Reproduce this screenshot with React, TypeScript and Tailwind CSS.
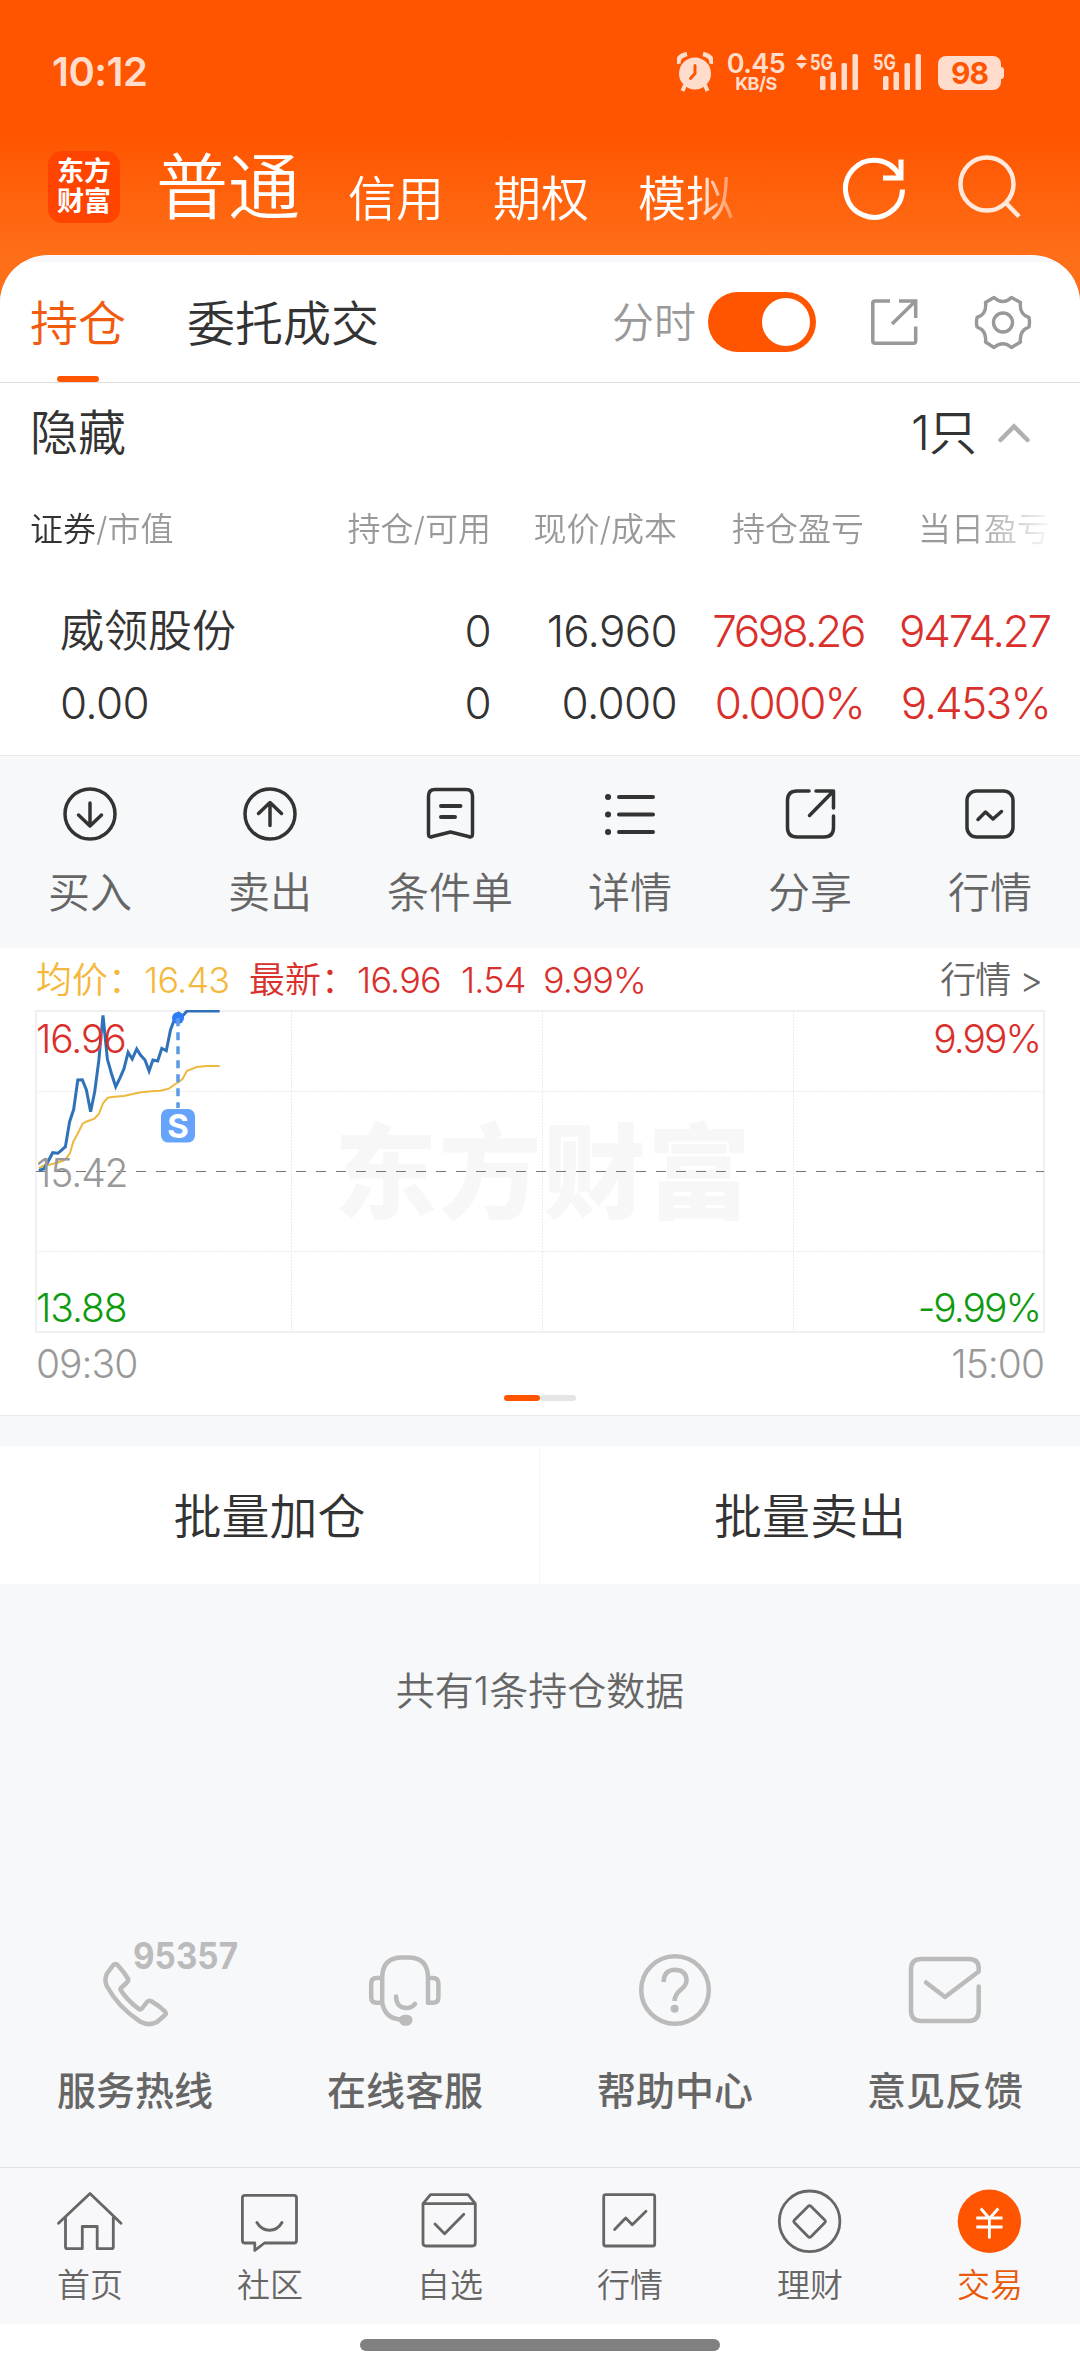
import type { ReactNode } from "react";
import clsx from "clsx";

const accounts = ["信用", "期权", "模拟"];

const actions: { label: string; icon: ReactNode }[] = [
  {
    label: "买入",
    icon: (
      <>
        <circle cx="30" cy="30" r="25" />
        <path d="M30 19V41.5M18.5 31L30 42L41.5 31" />
      </>
    ),
  },
  {
    label: "卖出",
    icon: (
      <>
        <circle cx="30" cy="30" r="25" />
        <path d="M30 41.5V19M18.5 29.5L30 18.5L41.5 29.5" />
      </>
    ),
  },
  {
    label: "条件单",
    icon: (
      <>
        <path d="M8.5 12Q8.5 5.5 15 5.5H46Q52.5 5.5 52.5 12V50Q52.5 54 48.5 52.5L30.5 48L12.5 52.5Q8.5 54 8.5 50Z" />
        <path strokeWidth="4" d="M21 22H40.500M21 33H35" />
      </>
    ),
  },
  {
    label: "详情",
    icon: (
      <>
        <path strokeWidth="4" d="M19 13H53M19 30.5H53M19 48H53" />
        <path strokeWidth="6" d="M8 13H8.1M8 30.5H8.1M8 48H8.1" />
      </>
    ),
  },
  {
    label: "分享",
    icon: <path d="M29 7H17Q7.5 7 7.5 16.5V43.5Q7.5 53 17 53H44Q53.5 53 53.5 43.5V32M36 7H53.5V24M29.500 31.500L53 7.5" />,
  },
  {
    label: "行情",
    icon: (
      <>
        <rect x="7" y="7" width="46" height="46" rx="9.5" />
        <path d="M18 35.5L25.5 28L33 35L41.5 27.5" />
      </>
    ),
  },
];

const services: { label: string; icon: ReactNode }[] = [
  {
    label: "服务热线",
    icon: (
      <>
        <path d="M113 35.5Q115.4 32.5 118 35.5Q124 42 127.8 48.5Q129 50.5 127 52.5L121 58Q120 59 121 60.5Q127 70 138.5 78.8Q140.5 80 142 78.5L147 72Q148.8 70 151 71Q159 75.5 165 81.5Q166.5 83.5 165 85L157 92Q149 96.5 140 91.5Q118 77 106.8 56Q104 49.5 107 43.5Z" />
        <text
          x="133"
          y="39"
          fontSize="37"
          fontWeight="700"
          textLength="105"
          lengthAdjust="spacingAndGlyphs"
          className="fill-[#bbb] stroke-none"
        >
          95357
        </text>
      </>
    ),
  },
  {
    label: "在线客服",
    icon: (
      <>
        <path d="M112.2 73V48Q112.2 27.5 132 27.5H138.5Q158 27.5 158 48V72.7H163Q168.4 72.7 168.4 67.5V53.5Q168.4 48 163 48H158M112.2 48H106.5Q101.2 48 101.2 53.5V67.5Q101.2 72.7 106.5 72.7H112.2Q115 89 131 89.5" />
        <path d="M126 66.5Q126.5 78 136.5 78Q141.5 78 145 74" />
        <rect x="129" y="84.7" width="13.5" height="11" rx="5.5" className="fill-[#bbb] stroke-none" />
      </>
    ),
  },
  {
    label: "帮助中心",
    icon: (
      <>
        <circle cx="135" cy="60" r="33.8" />
        <path strokeLinecap="butt" d="M123.7 52Q123.7 39.8 135.5 39.8Q146.5 40.5 146.5 50.5Q146.5 55 140.5 60Q134.6 65 134.6 71" />
        <circle cx="134.6" cy="78.7" r="4" className="fill-[#bbb] stroke-none" />
      </>
    ),
  },
  {
    label: "意见反馈",
    icon: <path d="M168.7 56.5V80.5Q168.7 91 158.5 91H111.5Q101 91 101 80.5V39.5Q101 29 111.5 29H158.5Q168.7 29 168.7 38V41.5L135 67L116 52.5" />,
  },
];

const tabs: { label: string; active?: boolean; icon: ReactNode }[] = [
  {
    label: "首页",
    icon: <path d="M4.5 38.3L36 8.5L67 38.3M11.5 33V62Q11.5 63.7 13.2 63.7H28.3V41.5H43.2V63.7H57.6Q59.3 63.7 59.3 62V33" />,
  },
  {
    label: "社区",
    icon: (
      <>
        <path d="M11 10.3H60Q62.5 10.3 62.5 12.8V55.5Q62.5 58 60 58H30.5L20.8 65.5V58H11Q8.4 58 8.4 55.5V12.8Q8.4 10.3 11 10.3Z" />
        <path strokeWidth="3" d="M22.9 37.5Q27.5 45.2 35.6 45.2Q43.5 45.2 48 37.5" />
      </>
    ),
  },
  {
    label: "自选",
    icon: <path d="M9 18.7L16.5 9.7H54L61.3 18.7V58Q61.3 61 58.3 61H12Q9 61 9 58ZM9 18.7H61.3M21 39L30.6 48.7L49.8 29.3" />,
  },
  {
    label: "行情",
    icon: (
      <>
        <rect x="9.7" y="9.7" width="51" height="51.3" rx="2" />
        <path d="M20.6 44.5L31.7 33L38.3 39.7L52 26.3" />
      </>
    ),
  },
  {
    label: "理财",
    icon: (
      <>
        <circle cx="35.6" cy="36.3" r="30.3" />
        <path d="M34 21.5Q35.6 19.8 37.2 21.5L50.7 35Q52.3 36.3 50.7 37.7L37.2 51.5Q35.6 53 34 51.5L20.5 37.7Q19 36.3 20.5 35Z" />
      </>
    ),
  },
  {
    label: "交易",
    active: true,
    icon: (
      <>
        <circle cx="35.4" cy="36.3" r="31.7" className="fill-[#ff5500] stroke-none" />
        <path className="stroke-white" strokeLinecap="butt" d="M26.8 23.5L35.4 33.5L44.3 23.5M35.4 33V53.5M22.3 33H48.5M22.3 42H48.5" />
      </>
    ),
  },
];

const pricePoints =
  "38.9,230.7 44,228.7 48.2,221.3 52.7,212.7 57.9,213.3 61.3,210.3 65.4,206.7 69.6,181.7 73.7,169.3 77.8,140 82.3,139.7 86.4,150 90.6,171.7 94.7,151.7 98.8,120.7 103,75.3 107.4,119.3 111.6,134 115.7,146.7 119.8,138.3 124,128.7 128.1,112.3 132.2,119 136.7,109 140.5,115 145,120 149.1,131 152.9,120 157.7,121 161.8,108.3 166.3,110.7 170.5,90 174.2,80 178.7,73.3 182.5,76 187,71 219.7,71";

const averagePoints =
  "38.9,228.3 43,225.7 48.2,225 56.8,222.7 63.7,220.7 67.1,217.3 69.9,213.3 73.3,201.7 77.5,194 82.6,183.7 86.1,181.7 90.2,180.3 94.7,178.3 98.8,174 103,163.3 107.4,158 111.6,157 124,156 132.6,154 141.2,152.3 151.5,151.3 160.1,150.7 168.7,148.7 173.9,145 178.7,142 182.5,139 187,130.7 191.1,129.3 196.3,127 206.6,126 219.7,126";

function Signal({ arrows }: { arrows?: boolean }) {
  return (
    <svg width="64" height="40" viewBox="0 0 64 40" fill="#ffdccb">
      {arrows && <path d="M0 10L5.500 4L11 10ZM0 13H11L5.500 19Z" />}
      <text x="14" y="19.5" fontSize="21.5" fontWeight="700" textLength="23" lengthAdjust="spacingAndGlyphs">
        5G
      </text>
      <rect x="24" y="26" width="5.5" height="14" rx="1.5" />
      <rect x="34.5" y="22" width="5.5" height="18" rx="1.5" />
      <rect x="45.5" y="13" width="5.5" height="27" rx="1.5" />
      <rect x="56.5" y="4" width="5.5" height="36" rx="1.5" />
    </svg>
  );
}

function StatusBar() {
  return (
    <div className="flex h-[144px] items-start pt-[50px] pl-[52px] text-[#ffdccb]">
      <div className="w-[625px] pt-[2px] text-[40px] leading-[40px] font-semibold tracking-[-0.5px]">10:12</div>
      <svg width="36" height="40" viewBox="0 0 36 40" className="mt-[2px]">
        <path d="M1.5 12Q0 4 10 2M34.5 12Q36 4 26 2" stroke="#ffdccb" strokeWidth="4.500" fill="none" />
        <path d="M8 33L5.500 39M28 33L30.500 39" stroke="#ffdccb" strokeWidth="4" />
        <circle cx="18" cy="21.5" r="16" fill="#ffdccb" />
        <path d="M18 13.500V21.500L13.500 26.500" stroke="#ff5500" strokeWidth="3" fill="none" strokeLinecap="round" />
      </svg>
      <div className="ml-[13px] flex w-[60px] flex-col items-center">
        <span className="text-[27px] leading-[27px] font-semibold tracking-[-0.5px]">0.45</span>
        <span className="text-[18px] leading-[14px] font-bold tracking-[-0.5px]">KB/S</span>
      </div>
      <div className="ml-[10px]">
        <Signal arrows />
      </div>
      <div className="-ml-px">
        <Signal />
      </div>
      <div className="mt-[6px] ml-[15px] flex h-[34px] w-[63px] items-center justify-center rounded-[8px] bg-[#ffdccb] text-[30px] leading-none font-bold tracking-[-1px] text-[#ff5500]">
        98
      </div>
      <div className="mt-[17px] h-[12px] w-[3px] rounded-r-[3px] bg-[#ffdccb]" />
    </div>
  );
}

function AccountBar() {
  return (
    <div className="flex h-[111px] items-start pl-[48px] text-white">
      <div className="mt-[7px] flex h-[72px] w-[72px] flex-col items-center justify-center rounded-[14px] bg-[#ff4400] text-[27px] leading-[30px] font-bold">
        <span>东方</span>
        <span>财富</span>
      </div>
      <div className="flex w-[690px] items-start font-[350] [mask-image:linear-gradient(to_right,#000_575px,transparent_630px)]">
        <span className="mt-[7px] ml-[36px] text-[72px] leading-[72px]">普通</span>
        <div className="ml-[48px] flex gap-[49px] pt-[31px] text-[48px] leading-[48px]">
          {accounts.map((name) => (
            <span key={name}>{name}</span>
          ))}
        </div>
      </div>
      <svg width="68" height="72" viewBox="0 0 68 72" className="mt-[8px] ml-[31px]" fill="none" stroke="white" strokeWidth="5">
        <path d="M61.500 37.500A28.500 28.500 0 1 1 58.500 24" />
        <path d="M60 7.500V26H42" />
      </svg>
      <svg width="68" height="72" viewBox="0 0 68 72" className="mt-[4px] ml-[46px]" fill="none" stroke="#ffe8dc" strokeWidth="4.500">
        <circle cx="32" cy="36" r="26.500" />
        <path d="M51 55L64 68.500" />
      </svg>
    </div>
  );
}

function PanelHeader() {
  return (
    <div className="flex h-[121px] items-center border-b border-[#ddd] bg-white pl-[30px] font-[350]">
      <div className="relative flex h-full items-center pt-[3px] text-[48px] text-[#f25a0e]">
        持仓
        <div className="absolute bottom-0 left-[27px] h-[6px] w-[42px] rounded-full bg-[#ff5500]" />
      </div>
      <div className="ml-[61px] w-[425px] pt-[3px] text-[48px] text-[#333]">委托成交</div>
      <div className="pt-[2px] text-[42px] text-[#999]">分时</div>
      <div className="ml-[12px] flex h-[60px] w-[108px] items-center justify-end rounded-full bg-[#ff5500] pr-[6px]">
        <div className="h-[48px] w-[48px] rounded-full bg-white" />
      </div>
      <svg width="60" height="60" viewBox="0 0 60 60" className="ml-[48px]" fill="none" stroke="#999" strokeWidth="3.500">
        <path d="M26 9H11Q8.800 9 8.800 11V49Q8.800 51.200 11 51.200H49.500Q51.700 51.200 51.700 49V34.500M35 9H51.700V26M28 32L51 9.500" />
      </svg>
      <svg width="60" height="60" viewBox="0 0 60 60" className="ml-[49px]" fill="none" stroke="#999" strokeWidth="3.400" strokeLinejoin="round">
        <path d="M21 5.500Q30 13.500 38.500 5.500L47.500 10.500Q46 22.500 56 25.500Q57 30 56 35Q46 38.500 47.500 50L38.500 55.500Q30 48 21 55.500L12.500 50Q14 38.500 4 35Q3 30 4 25.500Q14 22.500 12.500 10.500Z" />
        <circle cx="30" cy="30.500" r="9.500" />
      </svg>
    </div>
  );
}

function Holdings() {
  return (
    <section className="h-[372px] bg-white font-[350] text-[#333]">
      <div className="flex h-[100px] items-center pl-[30px] text-[48px]">
        <span>隐藏</span>
        <span className="ml-auto tracking-[-1px]">1只</span>
        <svg width="36" height="24" viewBox="0 0 36 24" className="mr-[48px] ml-[20px]" fill="none" stroke="#b0b0b0" strokeWidth="4.500" strokeLinecap="round">
          <path d="M4.500 19L18 5.500L31.500 19" />
        </svg>
      </div>
      <div className="mr-[30px] grid h-[92px] grid-cols-[269px_192px_186px_187px_186px] items-center pl-[30px] text-right text-[33px] text-[#999] [mask-image:linear-gradient(to_right,#000_970px,transparent_1055px)]">
        <span className="text-left">
          <span className="text-[#333]">证券</span>/市值
        </span>
        <span>持仓/可用</span>
        <span>现价/成本</span>
        <span>持仓盈亏</span>
        <span>当日盈亏</span>
      </div>
      <div className="mt-[20px] grid grid-cols-[238px_193px_186px_187px_186px] pl-[60px] text-right text-[44px] leading-[72px] tracking-[-0.7px]">
        <span className="text-left tracking-normal">威领股份</span>
        <span>0</span>
        <span>16.960</span>
        <span className="tracking-[-2.4px] text-[#d9302c]">7698.26</span>
        <span className="tracking-[-2.2px] text-[#d9302c]">9474.27</span>
        <span className="text-left">0.00</span>
        <span>0</span>
        <span>0.000</span>
        <span className="tracking-[-1.8px] text-[#d9302c]">0.000%</span>
        <span className="tracking-[-1.7px] text-[#d9302c]">9.453%</span>
      </div>
    </section>
  );
}

function Chart() {
  return (
    <section className="h-[468px] border-b border-[#e9eaee] bg-white font-[350]">
      <div className="flex h-[62px] items-center pt-px pr-[38px] pl-[36px] text-[36px] tracking-[-0.8px] text-[#d9302c]">
        <span className="w-[213px] text-[#f5b83d]">
          <span className="tracking-normal">均价：</span>16.43
        </span>
        <span className="w-[212px]">
          <span className="tracking-normal">最新：</span>16.96
        </span>
        <span className="w-[82px]">1.54</span>
        <span className="tracking-[-1px]">9.99%</span>
        <span className="ml-auto tracking-[-1px] text-[#666]">行情 &gt;</span>
      </div>
      <svg width="1080" height="326" viewBox="0 70 1080 326" fill="none" className="block">
        <text x="334" y="271" fontSize="103" fontWeight="900" letterSpacing="1.5" className="fill-[#f7f7f7]">
          东方财富
        </text>
        <rect x="36" y="71" width="1008" height="321" stroke="#f0f0f0" strokeWidth="2" />
        <path d="M36 151.500H1044M36 311.500H1044M291.500 71V392M542.500 71V392M793.500 71V392" stroke="#ebebeb" strokeDasharray="2 1" />
        <path d="M36 231.500H1044" stroke="#777" strokeDasharray="10 10" />
        <polyline points={averagePoints} stroke="#edb93f" strokeWidth="2" />
        <polyline points={pricePoints} stroke="#3072b8" strokeWidth="3" />
        <circle cx="178" cy="78" r="6" fill="#2f7df6" />
        <path d="M178 78.300V168" stroke="#5b9ae6" strokeWidth="3.500" strokeDasharray="8 6" />
        <rect x="161" y="169" width="34" height="33.500" rx="7" fill="#66a3fb" />
        <text x="178" y="198" fontSize="33" fontWeight="700" textAnchor="middle" fill="white">
          S
        </text>
        <g fontSize="39">
          <g letterSpacing="-1.1">
            <text x="36" y="113" fill="#d9302c">16.96</text>
            <text x="36" y="247" fill="#999">15.42</text>
            <text x="36" y="381.500" fill="#109a10">13.88</text>
          </g>
          <g letterSpacing="-2" textAnchor="end">
            <text x="1040" y="113" fill="#d9302c">9.99%</text>
            <text x="1040" y="381.500" fill="#109a10">-9.99%</text>
          </g>
        </g>
      </svg>
      <div className="flex h-[54px] items-center justify-between px-[36px] text-[39px] tracking-[-1px] text-[#999]">
        <span>09:30</span>
        <span>15:00</span>
      </div>
      <div className="mt-[5px] flex justify-center">
        <div className="h-[6px] w-[36px] rounded-full bg-[#ff5500]" />
        <div className="h-[6px] w-[36px] rounded-full bg-[#e5e5e5]" />
      </div>
    </section>
  );
}

export default function App() {
  return (
    <div className="h-[2372px] w-[1080px] overflow-hidden bg-[#f7f8fa] font-['Inter','Noto_Sans_CJK_SC',sans-serif] leading-none whitespace-nowrap">
      <div className="bg-[linear-gradient(#ff5500_0px,#ff5500_135px,#ff6e18_255px,#ff6e18_300px)]">
        <StatusBar />
        <AccountBar />
        <div className="overflow-hidden rounded-t-[48px] bg-[#f8f8fb] pt-[7px]">
          <PanelHeader />
        </div>
      </div>
      <Holdings />

      {/* Quick actions for the selected holding */}
      <section className="grid h-[193px] grid-cols-6 justify-items-center border-t border-[#e9e9ec] pt-[28px]">
        {actions.map((a) => (
          <div key={a.label} className="flex flex-col items-center gap-[28px]">
            <svg width="60" height="60" viewBox="0 0 60 60" fill="none" stroke="#333" strokeWidth="3.500" strokeLinecap="round" strokeLinejoin="round">
              {a.icon}
            </svg>
            <span className="text-[42px] font-[350] text-[#666]">{a.label}</span>
          </div>
        ))}
      </section>

      <Chart />

      {/* Batch orders */}
      <div className="mt-[30px] grid h-[138px] grid-cols-2 bg-white text-center text-[48px] leading-[141px] font-[350] text-[#333]">
        <span className="h-[138px] border-r border-[#f7f7f7]">批量加仓</span>
        <span>批量卖出</span>
      </div>
      <p className="mt-[87px] text-center text-[39px] font-[350] text-[#666]">共有1条持仓数据</p>

      {/* Support */}
      <section className="mt-[220px] grid grid-cols-4">
        {services.map((s) => (
          <div key={s.label} className="flex flex-col items-center">
            <svg width="270" height="110" viewBox="0 0 270 110" fill="none" stroke="#bbb" strokeWidth="4.500" strokeLinecap="round" strokeLinejoin="round">
              {s.icon}
            </svg>
            <span className="mt-[31px] text-[39px] font-medium text-[#666]">{s.label}</span>
          </div>
        ))}
      </section>

      {/* Tab bar */}
      <nav className="mt-[57px] grid h-[157px] grid-cols-6 justify-items-center border-t border-[#e2e2e4] bg-[#f8f8fa] pt-[17px]">
        {tabs.map((t) => (
          <div key={t.label} className="flex flex-col items-center gap-[12px]">
            <svg width="72" height="72" viewBox="0 0 72 72" fill="none" stroke="#666" strokeWidth="2.800" strokeLinecap="round" strokeLinejoin="round">
              {t.icon}
            </svg>
            <span className={clsx("text-[33px] font-[350]", t.active ? "text-[#e8590c]" : "text-[#666]")}>{t.label}</span>
          </div>
        ))}
      </nav>
      <div className="flex h-[48px] justify-center bg-white pt-[15px]">
        <div className="h-[12px] w-[360px] rounded-full bg-[#808080]" />
      </div>
    </div>
  );
}
